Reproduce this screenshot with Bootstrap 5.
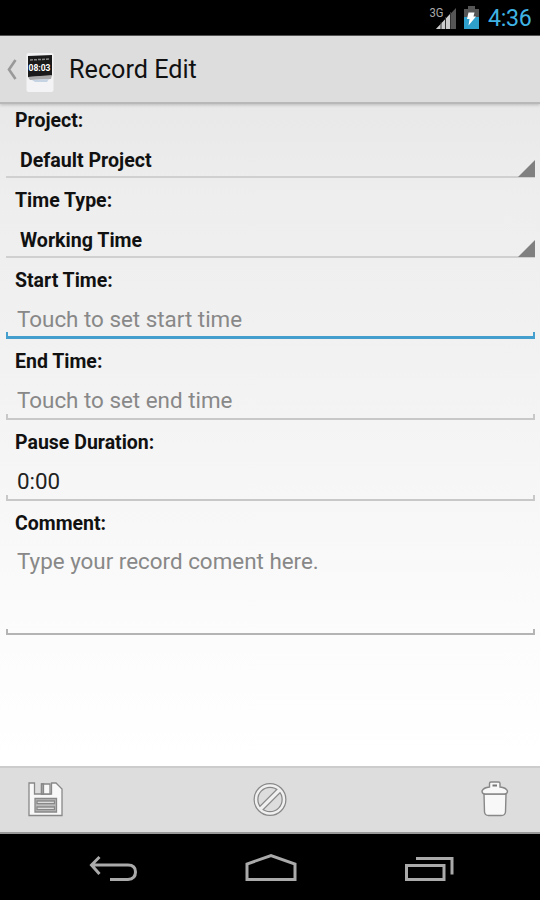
<!DOCTYPE html>
<html lang="en">
<head>
<meta charset="utf-8">
<meta name="viewport" content="width=device-width, initial-scale=1">
<title>Record Edit</title>
<link href="https://cdn.jsdelivr.net/npm/bootstrap@5.3.0/dist/css/bootstrap.min.css" rel="stylesheet">
<style>
body { font-family: Roboto, "Liberation Sans", sans-serif; color: #111; }
svg { display: block; flex: none; }
.screen { width: 540px; height: 900px; background: linear-gradient(#e8e8e8 100px, #eee 200px, #f0f0f0 300px, #f5f5f5 450px, #fcfcfc 640px, #fff 760px); }
.status { height: 36px; background: #000; padding-right: 9px; border-bottom: 1px solid #555; }
.clock { color: #3fb4e4; font-size: 23.2px; line-height: 36px; width: 43px; margin-left: 8px; letter-spacing: -.3px; }
.appbar { height: 68px; background: #ddd; border-bottom: 2px solid #b8b8b8; box-shadow: 0 1px 3px #0003; padding-left: 5px; }
.appbar h1 { font-size: 25.2px; line-height: 34px; margin-left: 15px; padding-top: 2px; }
.field { height: 81px; padding: 11px 5px 0 6px; }
.field label { font-size: 19.5px; line-height: 24px; font-weight: 700; padding-left: 9px; display: block; }
.field.pick { height: 80px; }
.field.first.pick { height: 74px; padding-top: 5px; }
.picked { height: 45px; border-bottom: 2px solid #d0d0d0; padding-left: 14px; font-size: 19.6px; font-weight: 700; line-height: 31px; }
.picked span { padding-top: 12px; }
.picked svg { margin-bottom: -1px; }
.entry { height: 46px; padding: 11px 11px 0; font-size: 22.4px; line-height: 31px; color: #888; --line: #c8c8c8;
  background: linear-gradient(var(--line), var(--line)) left bottom/100% 2px no-repeat, linear-gradient(var(--line), var(--line)) left bottom/2px 6px no-repeat, linear-gradient(var(--line), var(--line)) right bottom/2px 6px no-repeat; }
.entry.active { --line: #459fce; background-size: 100% 3px, 2px 7px, 2px 7px; }
.entry.filled { color: #222; }
.field.note { height: 134px; }
.note .entry { height: 99px; padding-top: 10px; --line: #b4b4b4; }
.tools { height: 68px; background: #ddd; border-top: 2px solid #ccc; border-bottom: 2px solid #999; padding: 0 27px; }
.navkeys { height: 66px; background: #000; padding: 0 86px 0 87px; }
</style>
<script src="https://cdn.jsdelivr.net/npm/bootstrap@5.3.0/dist/js/bootstrap.bundle.min.js"></script>
</head>
<body class="m-0">
<div class="screen d-flex flex-column overflow-hidden">
  <div class="status d-flex align-items-center justify-content-end flex-shrink-0">
    <svg width="52" height="36" viewBox="428 0 52 36">
      <text x="429.500" y="17" font-size="12" fill="#aaa" font-family="Roboto" textLength="14" lengthAdjust="spacingAndGlyphs">3G</text>
      <path d="M436 29L456 8V29Z" fill="#555"/>
      <path d="M436 29L451 13V29Z" fill="#ccc"/>
      <path d="M441 29V22M445.500 29V17M450.500 29V12" stroke="#333" stroke-width="1"/>
      <path d="M464 9h4V6h7v3h4v20h-15Z" fill="#555"/>
      <path d="M464 17h15v12h-15Z" fill="#2fa0cc"/>
      <path d="M468.500 12.500h6l-1 4h2.500l-7.500 9 1-6.500h-2.500Z" fill="#fff"/>
    </svg>
    <div class="clock">4:36</div>
  </div>
  <header class="appbar d-flex align-items-center flex-shrink-0">
    <svg width="49" height="66" viewBox="5 36 49 66">
      <path d="M15.500 60L9 69.500L15.500 79" fill="none" stroke="#999" stroke-width="2.600"/>
      <rect x="26.500" y="53" width="27" height="39" rx="2" fill="#f3f3f5"/>
      <path d="M28 56l24-1v21l-24 1Z" fill="#1a1a1a"/>
      <path d="M30 60l20-1" stroke="#888" stroke-width="1.500" stroke-dasharray="3 1"/>
      <text x="28.500" y="71" font-size="9" font-weight="700" fill="#fff" font-family="Roboto" textLength="22" lengthAdjust="spacingAndGlyphs">08:03</text>
      <path d="M28 77l24-2-1 4-21 1Z" fill="#aaa"/>
      <path d="M32 80l17-1-2 3H35Z" fill="#c5d3e3"/>
    </svg>
    <h1 class="mb-0 fw-normal">Record Edit</h1>
  </header>
  <main class="flex-grow-1">
    <div class="field first pick"><label>Project:</label>
      <div class="picked d-flex justify-content-between align-items-end"><span class="align-self-start">Default Project</span><svg width="17" height="17" viewBox="0 0 17 17"><path d="M0 17L17 0V17Z" fill="#808080"/></svg></div></div>
    <div class="field pick"><label>Time Type:</label>
      <div class="picked d-flex justify-content-between align-items-end"><span class="align-self-start">Working Time</span><svg width="17" height="17" viewBox="0 0 17 17"><path d="M0 17L17 0V17Z" fill="#808080"/></svg></div></div>
    <div class="field"><label>Start Time:</label><div class="entry active">Touch to set start time</div></div>
    <div class="field"><label>End Time:</label><div class="entry">Touch to set end time</div></div>
    <div class="field"><label>Pause Duration:</label><div class="entry filled">0:00</div></div>
    <div class="field note"><label>Comment:</label><div class="entry">Type your record coment here.</div></div>
  </main>
  <footer class="tools d-flex align-items-center justify-content-between flex-shrink-0">
    <svg width="36" height="38" viewBox="27 781 36 38" fill="#f8f8f8" stroke="#888" stroke-width="1.300">
      <path d="M29 783h5.500v11h17v-11h4.500l6 6v26.500H29Z"/>
      <path d="M41.500 784h8.500v10h-8.500Z"/><path d="M41.500 784h2v10h-2Z" fill="#aaa"/>
      <path d="M35 798.500h21.500v13.500H35Z" fill="#bbb"/><path d="M37 801h17.500v2.500H37ZM37 807h17.500v2.500H37Z"/>
    </svg>
    <svg width="36" height="38" viewBox="252.500 781 36 38" fill="none">
      <circle cx="270.500" cy="799.500" r="14" stroke="#888" stroke-width="5"/>
      <path d="M262 808L279 791" stroke="#888" stroke-width="6"/>
      <circle cx="270.500" cy="799.500" r="14" stroke="#f0f0f0" stroke-width="2.500"/>
      <path d="M261 809L280 790" stroke="#f0f0f0" stroke-width="3.200"/>
    </svg>
    <svg width="36" height="38" viewBox="477.500 781 36 38" fill="#f8f8f8" stroke="#888" stroke-width="1.400">
      <path d="M484.500 794h22l-.5 18q-.5 3.500-4 3.500h-13q-3.500 0-4-3.500Z"/>
      <path d="M490 787v-3.500q0-1.500 1.500-1.500h7.500q1.500 0 1.500 1.500v3.500q6 .5 7.500 4 0 3-3 3h-19.500q-3 0-3-3 1.500-3.500 7.500-4Z"/>
      <path d="M493 785.500h4.500" stroke="#777" stroke-width="2"/>
    </svg>
  </footer>
  <nav class="navkeys d-flex align-items-center justify-content-between flex-shrink-0">
    <svg width="52" height="66" viewBox="87 834 52 66" fill="none" stroke="#aaa" stroke-width="3">
      <path d="M91 865h37q7.500 0 7.500 7t-7.500 7.500h-18M99.500 857L91.500 865L99.500 874"/></svg>
    <svg width="54" height="66" viewBox="244.500 834 54 66" fill="none" stroke="#aaa" stroke-width="3">
      <path d="M246.500 879.500V864L270.500 855.500L294.500 864V879.500Z"/></svg>
    <svg width="50" height="66" viewBox="404 834 50 66" fill="none" stroke="#aaa" stroke-width="3">
      <path d="M406.500 865.500h37.500v14h-37.500ZM416 858.500h36v16"/></svg>
  </nav>
</div>
</body>
</html>
